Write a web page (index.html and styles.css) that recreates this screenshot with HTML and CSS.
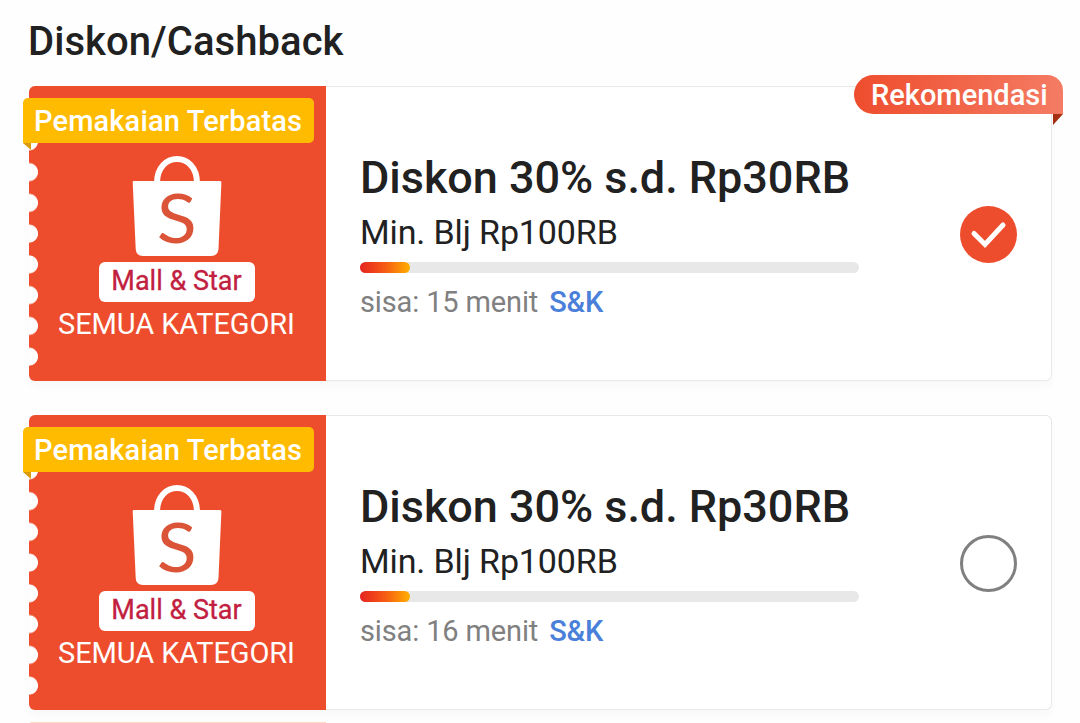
FILE: index.html
```html
<!DOCTYPE html>
<html lang="id">
<head>
  <meta charset="UTF-8">
  <title>Voucher</title>
  <link rel="stylesheet" href="styles.css">
</head>
<body>
  <h1>Diskon/Cashback</h1>

  <div class="voucher-list">
    <div class="voucher">
      <div class="stub">
        <span class="limited">Pemakaian Terbatas</span>
        <svg class="bag" viewBox="0 0 90 101">
          <path d="M25 27 C25 -5 65 -5 65 27" fill="none" stroke="#fff" stroke-width="6"/>
          <path d="M1.500 25 H88 Q89.500 25 89.400 26.500 L86.500 93 Q86 100 79 100 H11 Q4 100 3.700 93 L0.700 26.500 Q0.600 25 1.500 25 Z" fill="#fff"/>
          <text x="40.700" y="87" text-anchor="middle" transform="scale(1.100 1)">S</text>
        </svg>
        <span class="mall">Mall &amp; Star</span>
        <span class="category">SEMUA KATEGORI</span>
      </div>
      <div class="info">
        <h2>Diskon 30% s.d. Rp30RB</h2>
        <p class="min">Min. Blj Rp100RB</p>
        <div class="bar"><div class="fill" style="width: 10%"></div></div>
        <p class="left"><span>sisa: 15 menit</span><a href="#">S&amp;K</a></p>
      </div>
      <div class="radio checked">
        <svg viewBox="0 0 57 57" width="57" height="57">
          <path d="M14 27.500 L25 38.500 L43 19" fill="none" stroke="#fff" stroke-width="5" stroke-linecap="round"/>
        </svg>
      </div>
      <span class="ribbon">Rekomendasi</span>
    </div>

    <div class="voucher">
      <div class="stub">
        <span class="limited">Pemakaian Terbatas</span>
        <svg class="bag" viewBox="0 0 90 101">
          <path d="M25 27 C25 -5 65 -5 65 27" fill="none" stroke="#fff" stroke-width="6"/>
          <path d="M1.500 25 H88 Q89.500 25 89.400 26.500 L86.500 93 Q86 100 79 100 H11 Q4 100 3.700 93 L0.700 26.500 Q0.600 25 1.500 25 Z" fill="#fff"/>
          <text x="40.700" y="87" text-anchor="middle" transform="scale(1.100 1)">S</text>
        </svg>
        <span class="mall">Mall &amp; Star</span>
        <span class="category">SEMUA KATEGORI</span>
      </div>
      <div class="info">
        <h2>Diskon 30% s.d. Rp30RB</h2>
        <p class="min">Min. Blj Rp100RB</p>
        <div class="bar"><div class="fill" style="width: 10%"></div></div>
        <p class="left"><span>sisa: 16 menit</span><a href="#">S&amp;K</a></p>
      </div>
      <div class="radio"></div>
    </div>

    <div class="next"></div>
  </div>
</body>
</html>
```
FILE: styles.css
```css
* {
  box-sizing: border-box;
}

body {
  margin: 0;
  height: 723px;
  overflow: hidden;
  background: #fefefe;
  font-family: Roboto, sans-serif;
  color: #212121;
}

h1, h2, p {
  margin: 0;
  white-space: nowrap;
}

h1 {
  height: 86px;
  padding: 18px 0 0 28px;
  font-size: 40px;
  line-height: 47px;
  font-weight: 500;
  letter-spacing: 0.06px;
}

.voucher-list {
  padding: 0 28px 0 29px;
}

.voucher {
  position: relative;
  display: flex;
  height: 295px;
  margin-bottom: 34px;
  background: #fff;
  border: 1px solid #e8e8e8;
  border-left: none;
  border-radius: 6px;
  box-shadow: 0 6px 8px rgba(0, 0, 0, 0.025);
}

.stub {
  position: relative;
  display: flex;
  flex-direction: column;
  align-items: center;
  width: 297px;
  margin: -1px 0;
  padding: 70px 2px 0 0;
  background: #ee4d2d;
  border-radius: 6px 0 0 6px;
}

/* ticket notches on the left edge */
.stub::before {
  content: "";
  position: absolute;
  left: 0;
  top: 40px;
  width: 10px;
  height: 246px;
  background: radial-gradient(circle at 0 50%, #fefefe 8.6px, transparent 9.4px) 0 0 / 10px 30.75px;
}

.limited {
  position: absolute;
  left: -6px;
  top: 12px;
  width: 291px;
  height: 45px;
  padding-left: 11px;
  background: #ffbb00;
  border-radius: 5px 5px 5px 0;
  color: #fff;
  font-size: 29px;
  line-height: 46px;
  font-weight: 500;
  letter-spacing: 0.15px;
  white-space: nowrap;
}

.limited::after {
  content: "";
  position: absolute;
  left: 0;
  top: 45px;
  width: 8px;
  height: 7px;
  background: #d99a0b;
  clip-path: polygon(0 0, 100% 0, 100% 100%);
}

.bag {
  width: 90px;
  height: 101px;
  flex: none;
}

.bag text {
  font-family: Lato, sans-serif;
  font-size: 67px;
  fill: #dc5438;
}

.mall {
  width: 156px;
  height: 40px;
  margin-top: 5px;
  background: #fff;
  border-radius: 6px;
  color: #c2203f;
  font-size: 27px;
  line-height: 39px;
  text-align: center;
  white-space: nowrap;
  -webkit-text-stroke: 0.3px #c2203f;
}

.category {
  margin-top: 5px;
  color: #fff;
  font-size: 29px;
  line-height: 34px;
  letter-spacing: -0.1px;
  white-space: nowrap;
}

.info {
  width: 499px;
  margin-left: 34px;
  padding-top: 64px;
}

h2 {
  font-size: 45px;
  line-height: 54px;
  font-weight: 500;
  letter-spacing: -0.04px;
}

.min {
  margin-top: 7px;
  font-size: 34px;
  line-height: 40px;
  letter-spacing: -0.12px;
}

.bar {
  height: 11px;
  margin-top: 10px;
  background: #e8e8e8;
  border-radius: 6px;
}

.fill {
  height: 100%;
  border-radius: 6px;
  background: linear-gradient(90deg, #e52420, #f65a14 50%, #ffb000);
}

.left {
  display: flex;
  gap: 11px;
  margin-top: 12px;
  color: #808080;
  font-size: 29px;
  line-height: 34px;
  letter-spacing: -0.14px;
}

.left a {
  color: #4a80d9;
  font-weight: 500;
  text-decoration: none;
}

.radio {
  width: 57px;
  height: 57px;
  margin: 119px 0 0 101px;
  border: 3px solid #808080;
  border-radius: 50%;
}

.radio.checked {
  border: none;
  background: #ee4d2d;
}

.ribbon {
  position: absolute;
  right: -12px;
  top: -12px;
  width: 209px;
  height: 39px;
  padding-left: 17px;
  background: linear-gradient(90deg, #ee4d2d, #f47c64);
  border-radius: 20px 16px 0 20px;
  color: #fff;
  font-size: 29px;
  line-height: 40px;
  font-weight: 500;
  white-space: nowrap;
}

.ribbon::after {
  content: "";
  position: absolute;
  right: 0;
  top: 39px;
  width: 10px;
  height: 11px;
  background: #a52f12;
  clip-path: polygon(0 0, 100% 0, 0 100%);
}

.next {
  width: 297px;
  height: 20px;
  margin-top: -22px;
  background: #ffd9c4;
  border-radius: 3px 0 0 0;
}
```
